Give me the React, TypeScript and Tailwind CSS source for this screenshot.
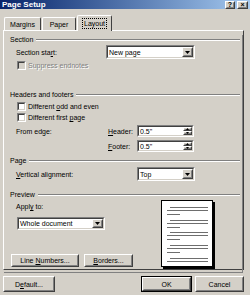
import React from 'react';

// Classic Windows "Page Setup" dialog, Layout tab

const Sunken: React.FC<{ className?: string; children?: React.ReactNode }> = ({ className = '', children }) => (
  <div className={`border border-t-[#808080] border-l-[#808080] border-r-white border-b-white ${className}`}>
    <div className="h-full w-full border border-t-[#404040] border-l-[#404040] border-r-[#d4d0c8] border-b-[#d4d0c8] bg-white flex items-center">
      {children}
    </div>
  </div>
);

const Raised: React.FC<{ className?: string; inner?: string; children?: React.ReactNode }> = ({ className = '', inner = '', children }) => (
  <div className={`border border-t-white border-l-white border-r-[#404040] border-b-[#404040] bg-[#d4d0c8] ${className}`}>
    <div className={`h-full w-full border border-t-[#d4d0c8] border-l-[#d4d0c8] border-r-[#808080] border-b-[#808080] flex items-center justify-center ${inner}`}>
      {children}
    </div>
  </div>
);

const DownArrow = () => (
  <svg width="5" height="3" viewBox="0 0 5 3">
    <path d="M0 0h5L2.5 3z" fill="#000" />
  </svg>
);

const Select: React.FC<{ value: string; className?: string }> = ({ value, className = '' }) => (
  <Sunken className={className}>
    <span className="flex-1 pl-[1px] truncate">{value}</span>
    <Raised className="w-[11px] h-full">
      <DownArrow />
    </Raised>
  </Sunken>
);

const Spin: React.FC<{ value: string }> = ({ value }) => (
  <Sunken className="w-[57px] h-[12px]">
    <span className="flex-1 pl-[1px]">{value}</span>
    <div className="flex flex-col h-full w-[9px]">
      <Raised className="h-1/2 w-full">
        <svg width="3" height="2" viewBox="0 0 3 2"><path d="M1.5 0L3 2H0z" fill="#000" /></svg>
      </Raised>
      <Raised className="h-1/2 w-full">
        <svg width="3" height="2" viewBox="0 0 3 2"><path d="M0 0h3L1.5 2z" fill="#000" /></svg>
      </Raised>
    </div>
  </Sunken>
);

const Checkbox: React.FC<{ label: React.ReactNode; disabled?: boolean }> = ({ label, disabled }) => (
  <div className="flex items-center h-[9px] pl-[13px]">
    <div className="w-[9px] h-[9px] border border-t-[#808080] border-l-[#808080] border-r-white border-b-white">
      <div className={`h-full w-full border border-t-[#404040] border-l-[#404040] border-r-[#d4d0c8] border-b-[#d4d0c8] ${disabled ? 'bg-[#d4d0c8]' : 'bg-white'}`} />
    </div>
    <span className={`ml-[2px] ${disabled ? 'text-[#808080] [text-shadow:1px_1px_0_#fff]' : ''}`}>{label}</span>
  </div>
);

const Group: React.FC<{ title: string; className?: string }> = ({ title, className = '' }) => (
  <div className={`flex items-center h-[9px] pl-[6px] pr-[2px] ${className}`}>
    <span>{title}</span>
    <div className="flex-1 ml-[3px] h-[2px] border-t border-t-[#808080] border-b border-b-white" />
  </div>
);

const U: React.FC<{ children: React.ReactNode }> = ({ children }) => <span className="underline">{children}</span>;

const PreviewPage = () => {
  const groups = [7, 20, 32, 45, 58];
  return (
    <svg width="54" height="69" viewBox="0 0 54 69">
      <rect x="0.5" y="0.5" width="51" height="66" fill="#fff" stroke="#000" />
      <rect x="52" y="2" width="2" height="67" fill="#000" />
      <rect x="2" y="67" width="52" height="2" fill="#000" />
      {groups.map((g, i) => (
        <g key={g} stroke="#6e6e6e" strokeWidth="1">
          <line x1="9" x2="47" y1={g + 0.5} y2={g + 0.5} />
          <line x1="6" x2="47" y1={g + 3.5} y2={g + 3.5} />
          {i < groups.length - 1 && <line x1="6" x2="19" y1={g + 7.5} y2={g + 7.5} />}
        </g>
      ))}
    </svg>
  );
};

export default function App() {
  return (
    <div className="w-[250px] h-[295px] overflow-hidden bg-[#d4d0c8] text-black text-[7px] leading-[9px] font-['Liberation_Sans',Arial,sans-serif]">
      {/* title bar */}
      <div className="h-[9px] flex items-center bg-linear-to-r from-[#0a246a] to-[#a6caf0]">
        <span className="pl-[2px] text-white font-bold text-[8px] leading-[9px]">Page Setup</span>
        <div className="ml-auto flex gap-[2px] pr-[2px]">
          <Raised className="w-[10px] h-[8px]">
            <span className="text-[7px] leading-none font-bold">?</span>
          </Raised>
          <Raised className="w-[11px] h-[8px]">
            <span className="text-[7px] leading-none font-bold">×</span>
          </Raised>
        </div>
      </div>

      {/* tabs */}
      <div className="mt-[6px] h-[15px] pl-[4px] flex items-end relative z-10">
        <div className="w-[37px] h-[13px] border-t border-l border-white border-r border-r-[#404040] rounded-t-[2px] flex items-center justify-center">
          Margins
        </div>
        <div className="ml-[1px] w-[34px] h-[13px] border-t border-l border-white border-r border-r-[#404040] rounded-t-[2px] flex items-center justify-center">
          Paper
        </div>
        <div className="ml-[1px] w-[35px] h-[16px] -mb-[1px] bg-[#d4d0c8] border-t border-l border-white border-r border-r-[#404040] rounded-t-[2px] flex items-center justify-center">
          <span className="outline outline-1 outline-dotted outline-black px-[1px]">Layout</span>
        </div>
      </div>

      {/* tab panel */}
      <div className="ml-[3px] w-[241px] h-[240px] border border-t-white border-l-white border-r-[#404040] border-b-[#404040]">
        <div className="h-full w-full border-r border-b border-[#808080]">
          <Group title="Section" className="mt-[4px]" />

          <div className="mt-[1px] h-[14px] flex items-center">
            <span className="w-[102px] pl-[12px]">Section sta<U>r</U>t:</span>
            <Select value="New page" className="w-[89px] h-[14px]" />
          </div>

          <div className="mt-[2px]">
            <Checkbox disabled label="Suppress endnotes" />
          </div>

          <Group title="Headers and footers" className="mt-[20px]" />
          <div className="mt-[3px]">
            <Checkbox label={<>Different <U>o</U>dd and even</>} />
          </div>
          <div className="mt-[2px]">
            <Checkbox label={<>Different first <U>p</U>age</>} />
          </div>

          <div className="mt-[3px] h-[12px] flex items-center">
            <span className="w-[104px] pl-[12px]">From edge:</span>
            <span className="w-[29px]"><U>H</U>eader:</span>
            <Spin value={'0.5"'} />
          </div>
          <div className="mt-[3px] h-[12px] flex items-center">
            <span className="w-[104px]" />
            <span className="w-[29px]"><U>F</U>ooter:</span>
            <Spin value={'0.5"'} />
          </div>

          <Group title="Page" className="mt-[4px]" />
          <div className="mt-[2px] h-[14px] flex items-center">
            <span className="w-[133px] pl-[12px]"><U>V</U>ertical alignment:</span>
            <Select value="Top" className="w-[58px] h-[14px]" />
          </div>

          <Group title="Preview" className="mt-[9px]" />
          <div className="flex">
            <div className="w-[157px] flex flex-col">
              <div className="mt-[4px] h-[8px] pl-[12px] leading-[8px]">Appl<U>y</U> to:</div>
              <div className="mt-[6px] pl-[13px]">
                <Select value="Whole document" className="w-[88px] h-[13px]" />
              </div>
              <div className="mt-[24px] pl-[7px] flex gap-[5px]">
                <Raised className="w-[68px] h-[13px]"><span>Line <U>N</U>umbers...</span></Raised>
                <Raised className="w-[49px] h-[13px]"><span><U>B</U>orders...</span></Raised>
              </div>
            </div>
            <div className="mt-[1px]">
              <PreviewPage />
            </div>
          </div>
        </div>
      </div>

      {/* dialog buttons */}
      <div className="mt-[6px] flex items-center">
        <Raised className="ml-[3px] w-[52px] h-[16px]"><span>D<U>e</U>fault...</span></Raised>
        <div className="ml-[86px] border border-black">
          <Raised className="w-[49px] h-[14px]">OK</Raised>
        </div>
        <Raised className="ml-[3px] w-[49px] h-[16px]">Cancel</Raised>
      </div>
    </div>
  );
}
